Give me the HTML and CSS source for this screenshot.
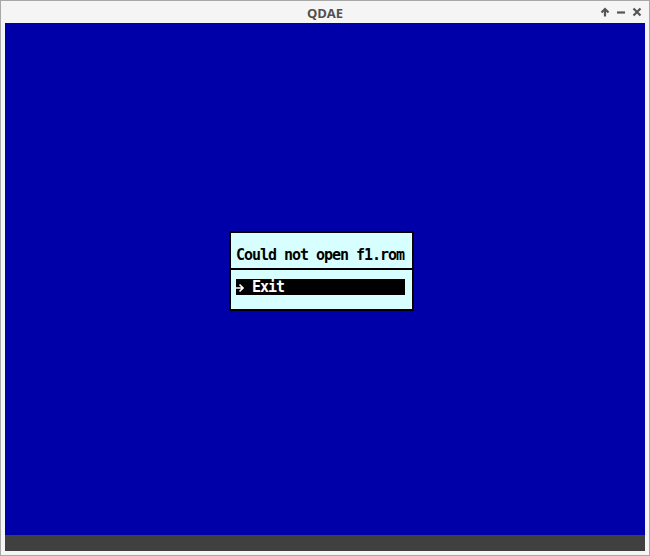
FILE: index.html
```html
<!DOCTYPE html>
<html>
<head>
<meta charset="utf-8">
<link rel="stylesheet" href="styles.css">
</head>
<body>
<div class="window">
  <div class="titlebar">
    <span class="title">QDAE</span>
    <div class="controls">
      <svg class="ctl" width="10" height="10" viewBox="0 0 10 10"><path d="M5 9.5V2.5M1.5 5.5L5 2L8.5 5.5" stroke="#555" stroke-width="2.2" fill="none"/></svg>
      <svg class="ctl" width="10" height="10" viewBox="0 0 10 10"><path d="M1 5.5H9" stroke="#555" stroke-width="2.2" fill="none"/></svg>
      <svg class="ctl" width="10" height="10" viewBox="0 0 10 10"><path d="M1.5 1.5L8.5 8.5M8.5 1.5L1.5 8.5" stroke="#555" stroke-width="2.2" fill="none"/></svg>
    </div>
  </div>
  <div class="client">
    <div class="screen">
      <div class="dialog">
        <div class="msg"><span class="line">Could not open f1.rom</span></div>
        <div class="menu"><div class="item"><span class="line"><svg class="arrow" width="8" height="16" viewBox="0 0 8 16"><path d="M0 9H7M3.5 5.5L7 9L3.5 12.5" stroke="#fff" stroke-width="1.6" fill="none"/></svg> Exit</span></div></div>
      </div>
    </div>
    <div class="status"></div>
  </div>
</div>
</body>
</html>
```
FILE: styles.css
```css
html, body {
  margin: 0;
  padding: 0;
  background: #f5f5f5;
}
.window {
  width: 650px;
  height: 556px;
  box-sizing: border-box;
  border: 1px solid #a8a8a8;
  background: #f5f5f5;
  display: flex;
  flex-direction: column;
}
.titlebar {
  height: 22px;
  position: relative;
  display: flex;
  align-items: center;
  justify-content: center;
}
.title {
  font-family: "Open Sans", "Noto Sans", sans-serif;
  font-weight: 700;
  font-size: 13px;
  color: #505050;
  padding-top: 1px;
}
.controls {
  position: absolute;
  right: 7px;
  top: 6px;
  display: flex;
  gap: 6px;
}
.ctl { display: block; }
.client {
  margin-left: 4px;
  width: 640px;
  display: flex;
  flex-direction: column;
}
.screen {
  height: 512px;
  background: #0000a8;
  box-sizing: border-box;
  padding-top: 208px;
  padding-left: 224px;
}
.status {
  height: 16px;
  background: #404040;
}
.dialog {
  width: 185px;
  box-sizing: border-box;
  border: 2px solid #000;
  background: #d8ffff;
  font-family: "DejaVu Sans Mono", monospace;
  font-weight: 700;
  font-size: 15px;
  letter-spacing: -1.03px;
  color: #000;
}
.line {
  display: block;
  height: 16px;
  line-height: 17px;
  white-space: pre;
}
.arrow {
  display: inline-block;
  vertical-align: top;
}
.msg {
  padding: 14px 5px 5px 5px;
  border-bottom: 2px solid #000;
}
.menu {
  padding: 9px 7px 14px 5px;
}
.item {
  background: #000;
  color: #fff;
  width: 169px;
}
```
